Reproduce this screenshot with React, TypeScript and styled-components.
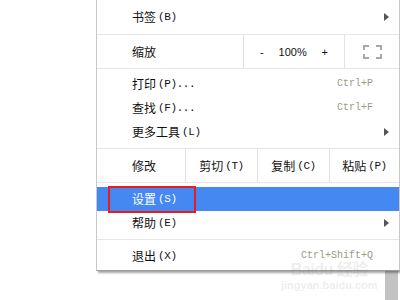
import React from 'react';
import styled, { createGlobalStyle } from 'styled-components';

const GlobalStyle = createGlobalStyle`
  html, body {
    margin: 0;
    padding: 0;
    background: #ffffff;
  }
  body {
    font-family: 'Noto Sans CJK SC', 'Liberation Sans', sans-serif;
  }
`;

const Page = styled.div`
  position: relative;
  width: 400px;
  height: 300px;
  overflow: hidden;
  background: #ffffff;
`;

const ScrollThumb = styled.div`
  position: absolute;
  left: 385px;
  top: 0;
  width: 13px;
  height: 300px;
  background: #c3c3c3;
`;

const Watermark = styled.div`
  position: absolute;
  z-index: 2;
  left: 281px;
  top: 263px;
  display: flex;
  flex-direction: column;
  align-items: center;
  gap: 2px;
  color: rgba(120, 120, 120, 0.15);
  font-family: 'Liberation Sans', 'Noto Sans CJK SC', sans-serif;
  font-weight: bold;
  pointer-events: none;
`;

const MarkTitle = styled.span`
  font-size: 16px;
  line-height: 14px;
  letter-spacing: -0.5px;
`;

const MarkUrl = styled.span`
  font-size: 11px;
  line-height: 12px;
`;

const Menu = styled.div`
  position: relative;
  z-index: 1;
  margin-left: 96px;
  width: 302px;
  background: #ffffff;
  border-left: 1px solid #c8c8c8;
  border-right: 1px solid #c8c8c8;
  border-bottom: 1px solid #9a9a9a;
  box-shadow: 2px 2px 2px rgba(0, 0, 0, 0.35);
  color: #111111;
  font-size: 12px;
`;

const Group = styled.div<{ $top: number; $bottom: number }>`
  padding: ${(p) => p.$top}px 0 ${(p) => p.$bottom}px;
  border-bottom: 1px solid #e6e6e6;
  &:last-child {
    border-bottom: none;
  }
`;

const Item = styled.div<{ $h?: number; $active?: boolean }>`
  position: relative;
  display: flex;
  align-items: center;
  height: ${(p) => p.$h ?? 24}px;
  padding: 0 9px 0 35px;
  background: ${(p) => (p.$active ? '#4688f1' : 'transparent')};
  color: ${(p) => (p.$active ? '#ffffff' : '#111111')};
`;

const Label = styled.span`
  flex: 1;
  display: flex;
  align-items: center;
  white-space: nowrap;
  line-height: 1;
`;

const Key = styled.span`
  font-family: 'Liberation Mono', monospace;
  font-size: 11px;
  letter-spacing: -0.4px;
  margin-left: 2px;
`;

const Shortcut = styled.span`
  margin-right: 17px;
  font-family: 'Liberation Mono', monospace;
  font-size: 10px;
  line-height: 12px;
  color: #9b9a84;
`;

const Arrow = styled.span`
  width: 0;
  height: 0;
  margin-right: 1px;
  border-top: 4px solid transparent;
  border-bottom: 4px solid transparent;
  border-left: 5px solid #555555;
`;

const Highlight = styled.div`
  position: absolute;
  left: 11px;
  top: -1px;
  width: 84px;
  height: 23px;
  border: 2px solid #e41d22;
`;

const SplitRow = styled.div<{ $cols: string }>`
  display: grid;
  grid-template-columns: ${(p) => p.$cols};
  height: 33px;
  border-bottom: 1px solid #e6e6e6;
`;

const Cell = styled.div<{ $lead?: boolean }>`
  display: flex;
  align-items: center;
  justify-content: ${(p) => (p.$lead ? 'flex-start' : 'center')};
  padding-left: ${(p) => (p.$lead ? 35 : 0)}px;
  border-left: ${(p) => (p.$lead ? 'none' : '1px solid #e2e2e2')};
  white-space: nowrap;
`;

const ZoomCtl = styled.div`
  display: flex;
  align-items: center;
  justify-content: space-between;
  width: 68px;
  font-family: 'Liberation Sans', sans-serif;
  font-size: 11px;
`;

const FullScreen = () => (
  <svg width="19" height="14" viewBox="0 0 19 14" fill="none" stroke="#a8a8a8" strokeWidth="2">
    <path d="M1 5V1h5M13 1h5v4M18 9v4h-5M6 13H1V9" />
  </svg>
);

const Text = ({ name, k, tail }: { name: string; k: string; tail?: string }) => (
  <Label>
    {name}
    <Key>({k}){tail}</Key>
  </Label>
);

export default function App() {
  return (
    <Page>
      <GlobalStyle />
      <ScrollThumb />
      <Menu>
        <Group $top={5} $bottom={5}>
          <Item>
            <Text name="书签" k="B" />
            <Arrow />
          </Item>
        </Group>
        <SplitRow $cols="146px 101px 55px">
          <Cell $lead>缩放</Cell>
          <Cell>
            <ZoomCtl>
              <span>-</span>
              <span>100%</span>
              <span>+</span>
            </ZoomCtl>
          </Cell>
          <Cell>
            <FullScreen />
          </Cell>
        </SplitRow>
        <Group $top={3} $bottom={4}>
          <Item>
            <Text name="打印" k="P" tail="..." />
            <Shortcut>Ctrl+P</Shortcut>
          </Item>
          <Item>
            <Text name="查找" k="F" tail="..." />
            <Shortcut>Ctrl+F</Shortcut>
          </Item>
          <Item>
            <Text name="更多工具" k="L" />
            <Arrow />
          </Item>
        </Group>
        <SplitRow $cols="88px 72px 72px 70px">
          <Cell $lead>修改</Cell>
          <Cell>
            剪切<Key>(T)</Key>
          </Cell>
          <Cell>
            复制<Key>(C)</Key>
          </Cell>
          <Cell>
            粘贴<Key>(P)</Key>
          </Cell>
        </SplitRow>
        <Group $top={4} $bottom={4}>
          <Item $active>
            <Text name="设置" k="S" />
            <Highlight />
          </Item>
          <Item>
            <Text name="帮助" k="E" />
            <Arrow />
          </Item>
        </Group>
        <Group $top={4} $bottom={2}>
          <Item>
            <Text name="退出" k="X" />
            <Shortcut>Ctrl+Shift+Q</Shortcut>
          </Item>
        </Group>
      </Menu>
      <Watermark>
        <MarkTitle>Baidu 经验</MarkTitle>
        <MarkUrl>jingyan.baidu.com</MarkUrl>
      </Watermark>
    </Page>
  );
}
